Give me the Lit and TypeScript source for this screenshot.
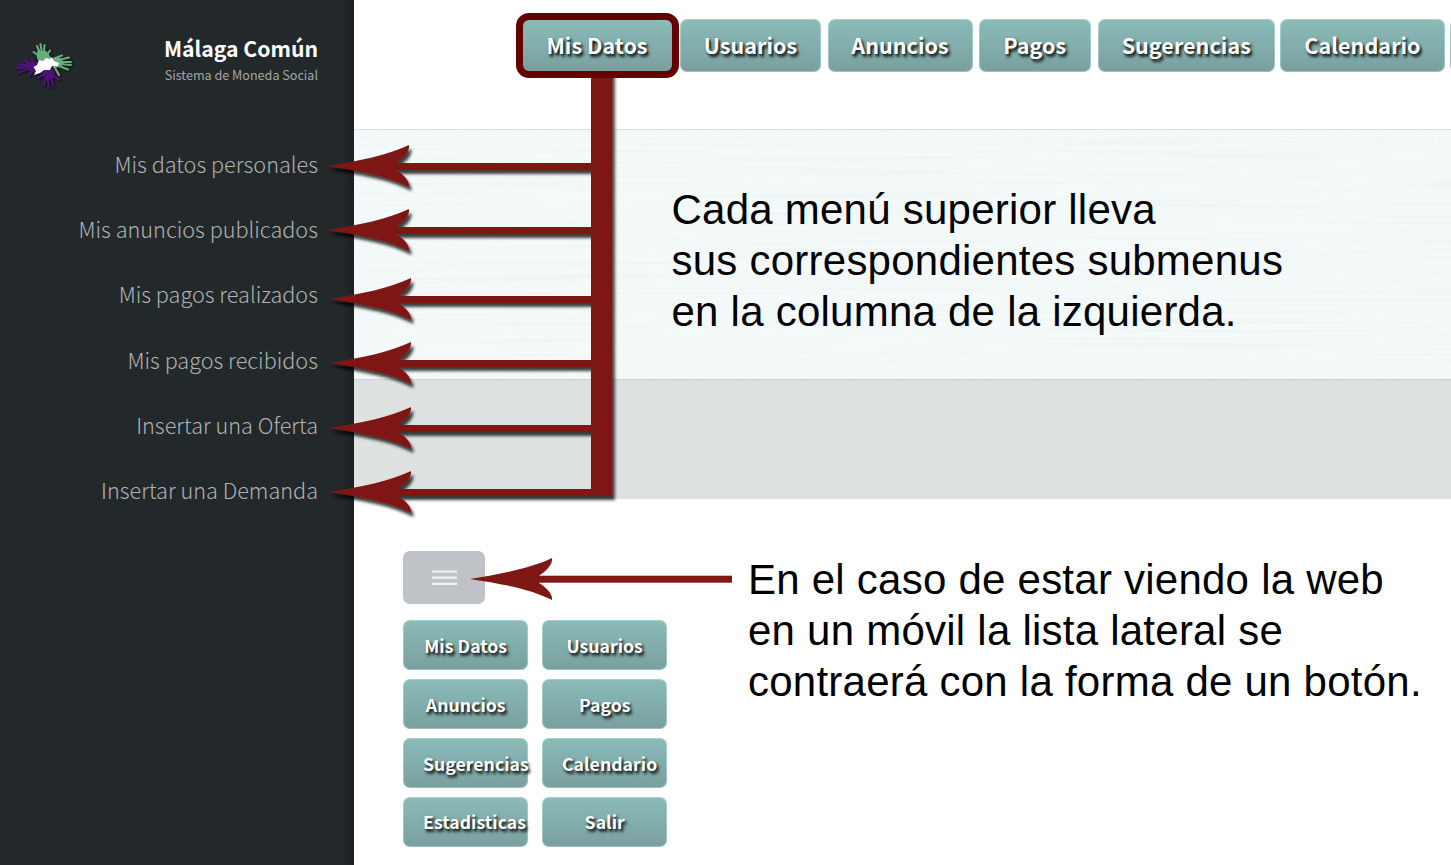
import { LitElement, html, svg, css } from "lit";
import { customElement, property } from "lit/decorators.js";

const TOP_MENU = [
  { label: "Mis Datos", width: 151, gap: 7.5, active: true },
  { label: "Usuarios", width: 141, gap: 6.5 },
  { label: "Anuncios", width: 145, gap: 6 },
  { label: "Pagos", width: 112.5, gap: 6.5 },
  { label: "Sugerencias", width: 177.5, gap: 5 },
  { label: "Calendario", width: 165, gap: 5 },
  { label: "", width: 170, gap: 0 },
];

const SUBMENU = [
  "Mis datos personales",
  "Mis anuncios publicados",
  "Mis pagos realizados",
  "Mis pagos recibidos",
  "Insertar una Oferta",
  "Insertar una Demanda",
];

const MOBILE_MENU = [
  "Mis Datos", "Usuarios", "Anuncios", "Pagos",
  "Sugerencias", "Calendario", "Estadisticas", "Salir",
];

const ARROWS = [
  { x: 327, y: 166 },
  { x: 327, y: 230 },
  { x: 329, y: 299 },
  { x: 329, y: 363 },
  { x: 329, y: 428 },
  { x: 329, y: 492 },
];

/* Swept arrow head whose tip is at the origin */
const HEAD = "M0 0C32-5 61-11 82-21C83-14 76-8 69-3V4C76 8 83 15 82 21C61 10 32 5 0 0Z";

@customElement("hands-logo")
class HandsLogo extends LitElement {
  static styles = css`
    :host { display: block; width: 70px; height: 60px; }
    svg { display: block; filter: drop-shadow(1px 1px 1px rgba(0, 0, 0, 0.7)); }
  `;
  render() {
    return html`<svg width="70" height="60" viewBox="0 0 70 60" fill="none" stroke-linecap="round" stroke-linejoin="round">
      <g stroke="#68ac7c" fill="#68ac7c" stroke-width="2.100">
        <path d="M28 17L36 17L40 23L32 28L28 23Z" />
        <path d="M29 21L23.500 17M30 18L27 11M32 18L30.500 9M34 18L34.500 10M37 20L40 15.500" />
        <path d="M42 24L50 24L53 28L50 31L44 32Z" />
        <path d="M43 24L52 20.500M49 25L59 22.500M50 27L61 27M50 29L61 30M49 31L58 34.500M45 33L49 40" />
      </g>
      <g stroke="#4f1276" fill="#4f1276" stroke-width="2.300">
        <path d="M17 28L26 28L25 37L18 34Z" />
        <path d="M19 28L13 24.500M24 28L22 25.500M18 30L9 29.500M18 32L7 33M18 34L9 37.500M22 36L19 40" />
        <path d="M32 36L42 35L44 42L36 44Z" />
        <path d="M34 39L28 43M36 43L34 50M38 43L38.500 52M41 42L43 50.500M42 40L49 44.500" />
      </g>
      <path fill="#fff" d="M23.500 32L27 30L29 25L33 26L36 23L40 24L41.500 22L44 26L49 28L48 31L42 31L40 35L34 35L30 38L24 40L26 36Z" />
    </svg>`;
  }
}

@customElement("menu-button")
class MenuButton extends LitElement {
  @property() label = "";
  static styles = css`
    :host {
      box-sizing: border-box;
      display: flex;
      align-items: center;
      justify-content: center;
      border-radius: 7px;
      border: 1px solid rgba(200, 230, 226, 0.45);
      background: linear-gradient(#8abcb9, #799f9e);
      background-origin: border-box;
      color: #fff;
      font: 700 var(--label-size, 21.6px)/1 "Noto Sans CJK SC", sans-serif;
      text-shadow: 2px 3px 3px rgba(0, 0, 0, 0.8), 1px 1px 2px rgba(0, 0, 0, 0.5);
      white-space: nowrap;
    }
  `;
  render() {
    return html`<span>${this.label}</span>`;
  }
}

@customElement("app-root")
class AppRoot extends LitElement {
  static styles = css`
    :host {
      display: flex;
      position: relative;
      width: 1451px;
      height: 865px;
      overflow: hidden;
      background: #fff;
      font-family: "Noto Sans CJK SC", sans-serif;
    }
    .side {
      box-sizing: border-box;
      width: 354px;
      flex: none;
      padding: 35px 36px 0 10px;
      background: linear-gradient(90deg, transparent 343px, rgba(0, 0, 0, 0.2)), #23282b;
      color: #b0b2b3;
    }
    .brand { display: flex; justify-content: space-between; height: 96px; }
    .names { text-align: right; white-space: nowrap; }
    .title { color: #fff; font-weight: 700; font-size: 21.2px; line-height: 25px; }
    .sub { font-size: 12.6px; line-height: 29px; font-weight: 400; color: #a4a6a7; }
    .list { margin: 0; padding: 0; list-style: none; text-align: right; }
    .list li { height: 65.2px; line-height: 65.2px; font-size: 21.65px; font-weight: 300; white-space: nowrap; }
    .main { flex: 1; min-width: 0; display: flex; flex-direction: column; }
    .head { height: 129px; box-sizing: border-box; padding: 19px 0 0 168px; display: flex; flex: none; }
    .head menu-button { flex: none; height: 52.5px; padding-bottom: 1.5px; }
    .active { outline: 7px solid #640002; outline-offset: -1px; }
    .head menu-button.active { margin-left: -0.5px; }
    .band {
      height: 251px;
      flex: none;
      box-sizing: border-box;
      border-top: 1px solid #d9dfdf;
      border-bottom: 1px solid #cbd1d1;
      background: #f4fafa;
      display: grid;
    }
    .band > * { grid-area: 1 / 1; }
    .copy {
      margin: 0;
      color: #000;
      font: 42px/51px "Liberation Sans", Arial, sans-serif;
      letter-spacing: 0.24px;
      white-space: nowrap;
    }
    .band .copy { padding: 54px 0 0 317.5px; }
    .grey { height: 119px; flex: none; background: #dde2e1; }
    .demo { flex: 1; display: flex; padding: 52px 0 0 49px; }
    .mobile { width: 265px; flex: none; }
    .burger {
      width: 82px;
      height: 53px;
      border-radius: 7px;
      background: #bfc3c8;
      display: grid;
      place-items: center;
    }
    .grid {
      --label-size: 17.7px;
      margin-top: 16px;
      display: grid;
      grid-template-columns: 125.4px 125.4px;
      grid-auto-rows: 50px;
      gap: 9px 13.6px;
    }
    .grid menu-button { padding-top: 2px; }
    .grid menu-button:nth-child(n + 7) { padding-top: 0; }
    .grid .wide { justify-content: flex-start; padding-left: 19px; }
    .demo .copy { padding: 3px 0 0 80px; }
    .arrows { position: absolute; inset: 0; pointer-events: none; }
  `;

  render() {
    return html`
      <aside class="side">
        <div class="brand">
          <hands-logo></hands-logo>
          <div class="names">
            <div class="title">Málaga Común</div>
            <div class="sub">Sistema de Moneda Social</div>
          </div>
        </div>
        <ul class="list">${SUBMENU.map((t) => html`<li>${t}</li>`)}</ul>
      </aside>
      <main class="main">
        <nav class="head">
          ${TOP_MENU.map((m) => html`<menu-button
            class=${m.active ? "active" : ""}
            .label=${m.label}
            style="width:${m.width}px;margin-right:${m.gap}px"
          ></menu-button>`)}
        </nav>
        <section class="band">
          <svg width="1097" height="249">
            <filter id="grain" x="0" y="0" width="100%" height="100%">
              <feTurbulence type="fractalNoise" baseFrequency="0.003 0.35" numOctaves="3" seed="4" />
              <feColorMatrix values="0 0 0 0 0.55  0 0 0 0 0.6  0 0 0 0 0.6  0.3 0 0 0 -0.135" />
            </filter>
            <filter id="speck" x="0" y="0" width="100%" height="100%">
              <feTurbulence type="fractalNoise" baseFrequency="0.4" numOctaves="2" seed="9" />
              <feColorMatrix values="0 0 0 0 0.55  0 0 0 0 0.6  0 0 0 0 0.6  0.3 0 0 0 -0.125" />
            </filter>
            <rect y="11" width="1097" height="217" filter="url(#grain)" />
            <rect width="1097" height="11" filter="url(#speck)" />
            <rect y="228" width="1097" height="21" filter="url(#speck)" />
          </svg>
          <p class="copy">Cada menú superior lleva<br />sus correspondientes submenus<br />en la columna de la izquierda.</p>
        </section>
        <div class="grey"></div>
        <section class="demo">
          <div class="mobile">
            <div class="burger">
              <svg width="25" height="16" stroke="#f0f1f2" stroke-width="2.200">
                <path d="M0 1.500H25M0 7.700H25M0 13.900H25" />
              </svg>
            </div>
            <div class="grid">
              ${MOBILE_MENU.map((t) => html`<menu-button
                class=${t.length > 9 ? "wide" : ""}
                .label=${t}
              ></menu-button>`)}
            </div>
          </div>
          <p class="copy">En el caso de estar viendo la web<br />en un móvil la lista lateral se<br />contraerá con la forma de un botón.</p>
        </section>
      </main>
      <svg class="arrows" width="1451" height="865" fill="#7f1815">
        <defs>
          <filter id="drop" filterUnits="userSpaceOnUse" x="300" y="70" width="350" height="460">
            <feDropShadow dx="2.500" dy="4" stdDeviation="1.600" flood-color="#000" flood-opacity="0.75" />
          </filter>
          <clipPath id="below"><rect x="300" y="78" width="400" height="480" /></clipPath>
        </defs>
        <g clip-path="url(#below)">
          <g filter="url(#drop)">
            <rect x="591" y="60" width="21.300" height="436" />
            ${ARROWS.map((a) => svg`
              <path d=${HEAD} transform="translate(${a.x} ${a.y})" />
              <rect x=${a.x + 66} y=${a.y - 3} width=${592 - a.x - 66} height="7" />`)}
          </g>
        </g>
        <path d=${HEAD} transform="translate(470 579)" />
        <rect x="536" y="575.700" width="196" height="7" />
      </svg>
    `;
  }
}
